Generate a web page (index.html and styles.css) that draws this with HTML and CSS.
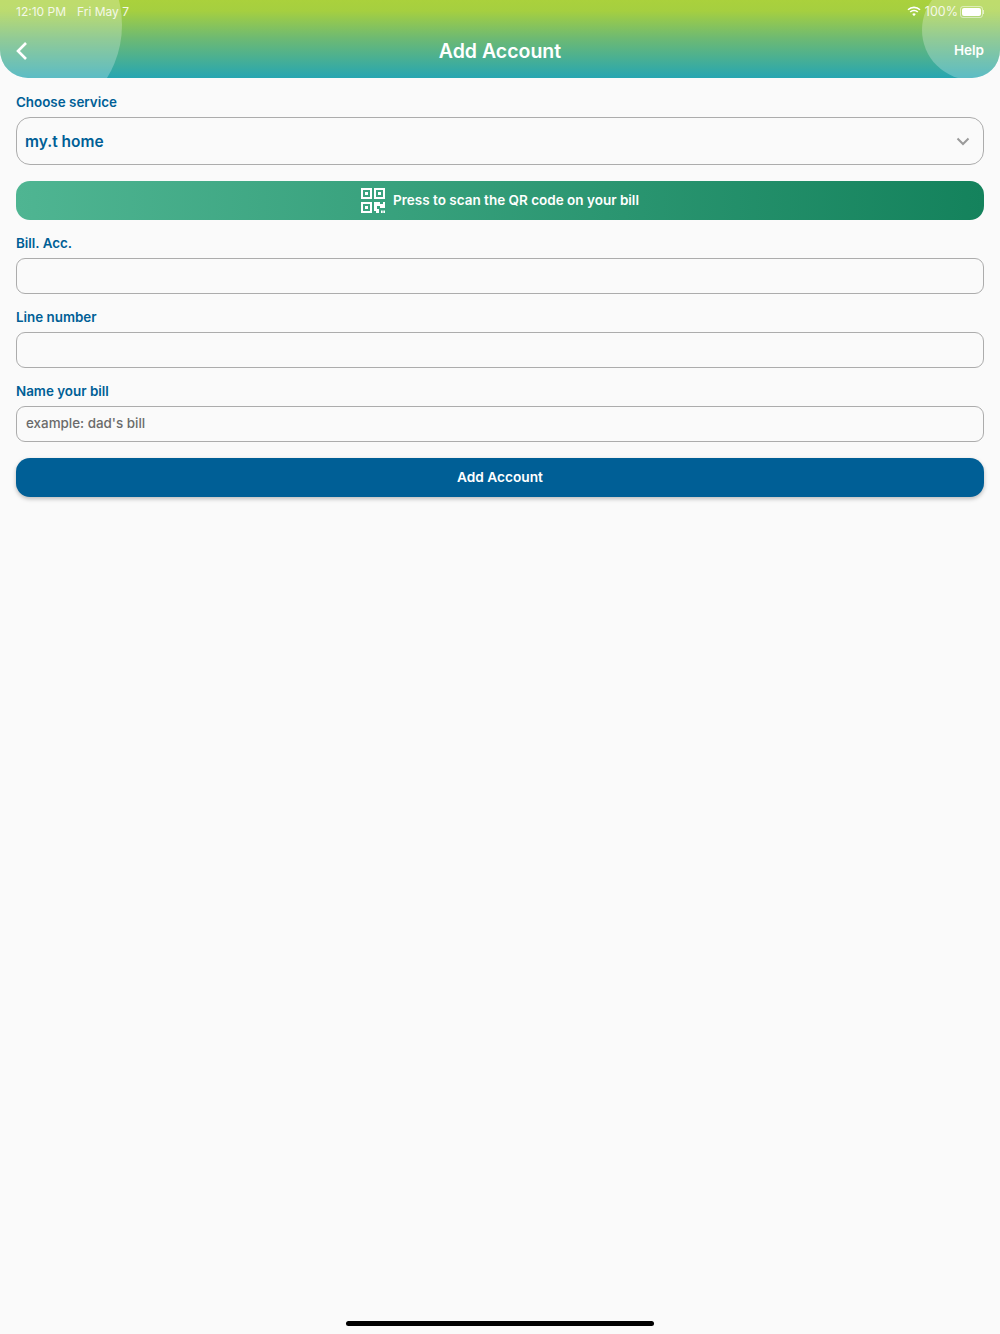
FILE: index.html
```html
<!DOCTYPE html>
<html lang="en">
<head>
  <meta charset="UTF-8">
  <meta name="viewport" content="width=device-width, initial-scale=1.0">
  <title>Add Account</title>
  <link rel="stylesheet" href="styles.css">
</head>
<body>
  <div class="header">
    <div class="blob blob-left"></div>
    <div class="blob blob-right"></div>
    <div class="statusbar">
      <div class="status-time"><span>12:10 PM</span><span>Fri May 7</span></div>
      <div class="status-right">
        <svg class="wifi" width="14" height="11" viewBox="0 0 14 11">
          <path d="M1 3.8A8.6 8.6 0 0 1 13 3.8" fill="none" stroke="#fff" stroke-width="1.6"/>
          <path d="M3.2 6A5.4 5.4 0 0 1 10.8 6" fill="none" stroke="#fff" stroke-width="1.6"/>
          <path d="M5.2 8.1A2.6 2.6 0 0 1 8.8 8.1L7 10.2Z" fill="#fff"/>
        </svg>
        <span class="battery-pct">100%</span>
        <div class="battery"><div class="battery-fill"></div></div>
        <div class="battery-cap"></div>
      </div>
    </div>
    <div class="navrow">
      <svg class="back" width="12" height="20" viewBox="0 0 12 20">
        <path d="M10 2L2 10L10 18" fill="none" stroke="#fff" stroke-width="2.6"/>
      </svg>
      <div class="title">Add Account</div>
      <div class="help">Help</div>
    </div>
  </div>

  <div class="form">
    <label class="field-label">Choose service</label>
    <div class="select">
      <span>my.t home</span>
      <svg width="14" height="9" viewBox="0 0 14 9">
        <path d="M1.5 1.5L7 7L12.5 1.5" fill="none" stroke="#9a9a9a" stroke-width="2"/>
      </svg>
    </div>

    <div class="scan">
      <svg width="24" height="25" viewBox="0 0 24 25">
        <g fill="none" stroke="#fff" stroke-width="2">
          <rect x="1" y="1" width="9" height="9"/>
          <rect x="14" y="1" width="9" height="9"/>
          <rect x="1" y="15" width="9" height="9"/>
        </g>
        <g fill="#fff">
          <rect x="4" y="4" width="3" height="3"/>
          <rect x="17" y="4" width="3" height="3"/>
          <rect x="4" y="18" width="3" height="3"/>
          <path d="M13 14H19V16H22V14H24V20H19V18H16V21H18V25H15V23H13Z"/>
          <rect x="20" y="22.5" width="1.7" height="2.5"/>
          <rect x="22.3" y="22.5" width="1.7" height="2.5"/>
        </g>
      </svg>
      <span>Press to scan the QR code on your bill</span>
    </div>

    <label class="field-label">Bill. Acc.</label>
    <div class="input"></div>

    <label class="field-label">Line number</label>
    <div class="input"></div>

    <label class="field-label">Name your bill</label>
    <div class="input placeholder">example: dad's bill</div>

    <div class="submit">Add Account</div>
  </div>

  <div class="home-indicator"></div>
</body>
</html>
```

FILE: styles.css
```css
html, body {
  margin: 0;
  padding: 0;
}
body {
  font-family: 'Inter', 'Roboto', sans-serif;
  background: #fafafa;
  width: 1000px;
  height: 1334px;
  position: relative;
  overflow: hidden;
}
.header {
  position: relative;
  height: 78px;
  overflow: hidden;
  border-radius: 0 0 28px 28px;
  background: linear-gradient(180deg, #aad13c 0%, #a5cf40 14%, #6cb974 50%, #26a6b2 100%);
  color: #fff;
}
.blob {
  position: absolute;
  background: rgba(255,255,255,0.25);
  border-radius: 50%;
}
.blob-left {
  left: -80px;
  top: -76px;
  width: 202px;
  height: 202px;
}
.blob-right {
  left: 922px;
  top: -20px;
  width: 100px;
  height: 100px;
}
.statusbar {
  position: relative;
  display: flex;
  justify-content: space-between;
  align-items: center;
  height: 23px;
  padding: 0 16px;
  font-size: 12px;
  color: #f4f8e8;
}
.status-time {
  display: flex;
  gap: 11px;
}
.status-right {
  display: flex;
  align-items: center;
  gap: 2px;
}
.wifi {
  margin-right: 2px;
}
.battery-pct {
  font-size: 12.5px;
}
.battery {
  width: 23px;
  height: 12px;
  box-sizing: border-box;
  border: 1px solid rgba(255,255,255,0.5);
  border-radius: 3px;
  padding: 1px;
}
.battery-fill {
  width: 100%;
  height: 100%;
  background: #fff;
  border-radius: 2px;
}
.battery-cap {
  width: 1px;
  height: 4px;
  margin-left: -2px;
  background: rgba(255,255,255,0.6);
}
.navrow {
  position: relative;
  display: grid;
  grid-template-columns: 1fr auto 1fr;
  align-items: center;
  height: 55px;
  padding: 0 16px;
}
.title {
  font-size: 19.5px;
  font-weight: 600;
}
.help {
  font-size: 13.5px;
  font-weight: 600;
  text-align: right;
  margin-top: -2px;
}
.form {
  display: flex;
  flex-direction: column;
  padding: 16px 16px 0;
}
.field-label {
  color: #005f96;
  font-size: 13.4px;
  font-weight: 600;
  line-height: 16px;
  margin-bottom: 7px;
}
.select {
  display: flex;
  align-items: center;
  justify-content: space-between;
  height: 48px;
  box-sizing: border-box;
  border: 1.5px solid #acacac;
  border-radius: 14px;
  padding: 0 13px 0 8px;
  color: #005f96;
  font-size: 15.5px;
  font-weight: 600;
}
.scan {
  display: flex;
  align-items: center;
  justify-content: center;
  gap: 8px;
  height: 39px;
  margin: 16px 0 15px;
  border-radius: 14px;
  background: linear-gradient(90deg, #4fb592 0%, #14825c 100%);
  color: #fff;
  font-size: 13.5px;
  font-weight: 600;
}
.scan span {
  margin-bottom: 2px;
}
.input {
  height: 36px;
  box-sizing: border-box;
  border: 1.5px solid #acacac;
  border-radius: 9px;
  margin-bottom: 15px;
  padding: 0 9px;
}
.placeholder {
  display: flex;
  align-items: center;
  color: #6b6b6b;
  font-size: 13.4px;
  font-weight: 500;
  padding-bottom: 2px;
  margin-bottom: 16px;
}
.submit {
  display: flex;
  align-items: center;
  justify-content: center;
  height: 39px;
  padding-bottom: 1px;
  box-sizing: border-box;
  border-radius: 14px;
  background: #005f96;
  box-shadow: 0 2px 4px rgba(0,0,0,0.25);
  color: #fff;
  font-size: 13.7px;
  font-weight: 600;
}
.home-indicator {
  position: absolute;
  left: 346px;
  bottom: 8px;
  width: 308px;
  height: 5px;
  border-radius: 3px;
  background: #000;
}
```
